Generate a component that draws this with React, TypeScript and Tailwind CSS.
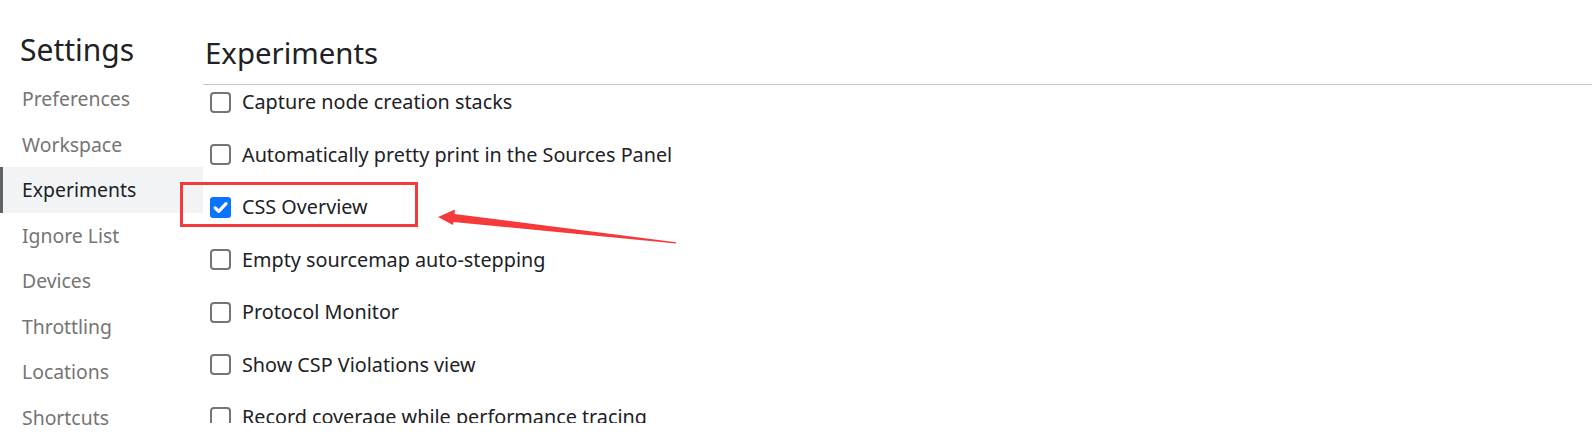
import React from "react";

const sections = [
  "Preferences",
  "Workspace",
  "Experiments",
  "Ignore List",
  "Devices",
  "Throttling",
  "Locations",
  "Shortcuts",
];

const experiments = [
  { label: "Capture node creation stacks", checked: false },
  { label: "Automatically pretty print in the Sources Panel", checked: false },
  { label: "CSS Overview", checked: true },
  { label: "Empty sourcemap auto-stepping", checked: false },
  { label: "Protocol Monitor", checked: false },
  { label: "Show CSP Violations view", checked: false },
  { label: "Record coverage while performance tracing", checked: false },
];

function Checkbox({ checked }: { checked: boolean }) {
  if (checked) {
    return (
      <span className="flex h-[21px] w-[21px] shrink-0 items-center justify-center rounded-[3px] bg-[#0b74ff]">
        <svg width="17" height="17" viewBox="0 0 16 16" fill="none">
          <path d="M3 8.4l3.3 3.3L13.2 4.4" stroke="white" strokeWidth="3" strokeLinecap="round" strokeLinejoin="round" />
        </svg>
      </span>
    );
  }
  return <span className="h-[21px] w-[21px] shrink-0 rounded-[4px] border-2 border-[#757575] bg-white" />;
}

export default function App() {
  return (
    <div
      className="relative flex h-[438px] w-full overflow-hidden bg-white text-[#202124]"
      style={{ fontFamily: '"Segoe UI", "Noto Sans", "Open Sans", sans-serif' }}
    >
      {/* Sidebar */}
      <div className="w-[203px] shrink-0">
        <div className="h-[76px] pl-[20px] pt-[30px] text-[30px] leading-[40px]">Settings</div>
        {sections.map((s) =>
          s === "Experiments" ? (
            <div
              key={s}
              className="flex h-[45.5px] items-center border-l-[3px] border-[#5f6368] bg-[#f1f3f4] pl-[19px] text-[19.4px] text-[#202124]"
            >
              {s}
            </div>
          ) : (
            <div key={s} className="flex h-[45.5px] items-center pl-[22px] text-[19.4px] text-[#757575]">
              {s}
            </div>
          )
        )}
      </div>

      {/* Main panel */}
      <div className="flex min-w-0 flex-1 flex-col">
        <div className="h-[85px] shrink-0 border-b border-[#cbcbcf] pl-[2px] pt-[33px] text-[29.4px] leading-[40px]">
          Experiments
        </div>
        <div className="flex h-[338px] flex-col gap-[18.5px] overflow-hidden">
          {experiments.map((e) => (
            <div key={e.label} className="flex h-[34px] shrink-0 items-center gap-[11px] pl-[7px] text-[19.8px]">
              <Checkbox checked={e.checked} />
              <span>{e.label}</span>
            </div>
          ))}
        </div>
      </div>

      {/* Annotation: highlight box */}
      <div className="pointer-events-none absolute left-[180px] top-[182px] h-[45px] w-[238px] border-[3px] border-[#f43a3a]" />

      {/* Annotation: arrow */}
      <svg className="pointer-events-none absolute left-0 top-0" width="1592" height="438">
        <polygon
          points="438,217 455,209.5 454.5,214 676,242.2 676,243.4 453.5,222 453,225"
          fill="#f43a3a"
        />
      </svg>
    </div>
  );
}
